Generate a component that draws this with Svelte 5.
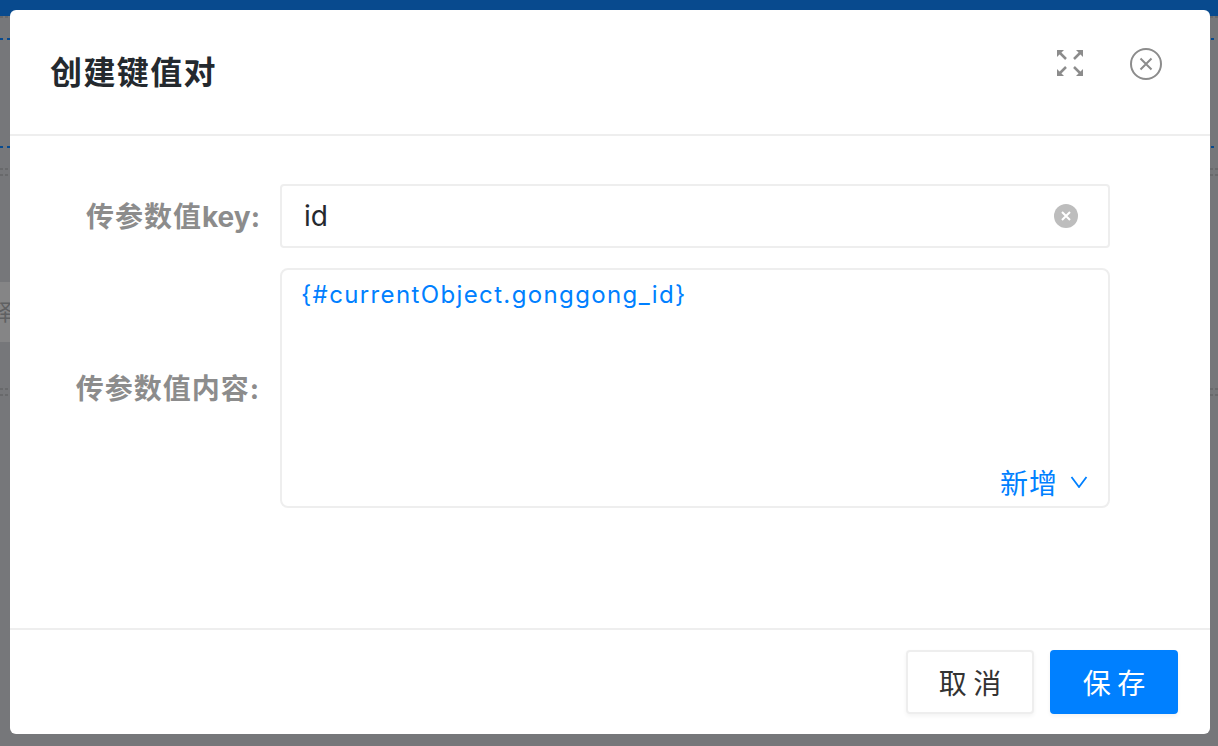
<script>
  let key = $state('id');
  let content = $state('{#currentObject.gonggong_id}');
</script>

<div class="page">
  <div class="topbar"></div>
  <div class="behind-page">
    <i class="dash gray d0"></i>
    <i class="dash navy d1"></i>
    <i class="dash navy d2"></i>
    <i class="dash gray d3"></i>
    <i class="dash gray d4"></i>
    <span class="behind">释</span>
    <i class="dash gray d5"></i>
    <i class="dash gray d6"></i>
  </div>

  <div class="modal">
    <header class="modal-head">
      <h2>创建键值对</h2>
      <div class="head-icons">
        <svg class="expand" width="26" height="26" viewBox="0 0 26 26" fill="#8c8c8c" stroke="#8c8c8c">
          <path d="M0 0h7L0 7z" stroke="none" />
          <path d="M3 3l6 6" stroke-width="2.5" />
          <path d="M26 0h-7L26 7z" stroke="none" />
          <path d="M23 3l-6 6" stroke-width="2.5" />
          <path d="M0 26h7L0 19z" stroke="none" />
          <path d="M3 23l6-6" stroke-width="2.5" />
          <path d="M26 26h-7L26 19z" stroke="none" />
          <path d="M23 23l-6-6" stroke-width="2.5" />
        </svg>
        <svg width="32" height="32" viewBox="0 0 32 32" fill="none" stroke="#8c8c8c">
          <circle cx="16" cy="16" r="15" stroke-width="2" />
          <path d="M10.5 10.5l11 11M21.5 10.5l-11 11" stroke-width="2" />
        </svg>
      </div>
    </header>

    <div class="modal-body">
      <div class="row">
        <label for="kv-key">传参数值<span class="latin">key:</span></label>
        <div class="input-wrap">
          <input id="kv-key" bind:value={key} />
          <span class="clear">
            <svg width="10" height="10" viewBox="0 0 10 10" stroke="#fff" stroke-width="2">
              <path d="M1 1l8 8M9 1l-8 8" />
            </svg>
          </span>
        </div>
      </div>
      <div class="row">
        <label for="kv-content">传参数值内容:</label>
        <div class="area-wrap">
          <textarea id="kv-content" bind:value={content}></textarea>
          <button class="add">
            新增
            <svg width="18" height="12" viewBox="0 0 18 12" fill="none" stroke="#0080ff" stroke-width="1.8">
              <path d="M1.5 1l7.5 10 7.5-10" />
            </svg>
          </button>
        </div>
      </div>
    </div>

    <footer class="modal-foot">
      <button class="btn">取 消</button>
      <button class="btn primary">保 存</button>
    </footer>
  </div>
</div>

<style>
  :global(body) {
    margin: 0;
    background: #76777a;
    font-family: Inter, "Noto Sans CJK SC", sans-serif;
  }

  .page {
    position: relative;
    width: 1218px;
    height: 746px;
    overflow: hidden;
    background: #76777a;
  }

  .topbar {
    height: 16px;
    background: #084a8e;
  }

  .behind-page {
    position: absolute;
    inset: 0;
  }

  .dash {
    position: absolute;
    left: 0;
    width: 100%;
    height: 2px;
  }
  .navy {
    background: repeating-linear-gradient(90deg, #084a8e 0 3.5px, transparent 3.5px 7px);
  }
  .gray {
    background: repeating-linear-gradient(90deg, #68696b 0 3px, transparent 3px 5px);
  }
  .d0 { top: 16px; }
  .d1 { top: 38px; }
  .d2 { top: 146px; }
  .d3 { top: 168px; }
  .d4 { top: 174px; }
  .d5 { top: 388px; }
  .d6 { top: 394px; }

  .behind {
    position: absolute;
    top: 282px;
    left: -10px;
    width: 20px;
    height: 60px;
    line-height: 60px;
    font-size: 22px;
    color: #5f6062;
    background: #858586;
  }

  .modal {
    position: absolute;
    top: 10px;
    left: 10px;
    width: 1200px;
    height: 724px;
    display: flex;
    flex-direction: column;
    background: #fff;
    border-radius: 6px;
  }

  .modal-head {
    flex: none;
    display: flex;
    justify-content: space-between;
    padding: 38px 48px 0 40px;
    height: 86px;
    border-bottom: 2px solid #eeeeee;
  }

  .modal-head h2 {
    margin: 0;
    font-size: 32px;
    letter-spacing: 1.4px;
    line-height: 50px;
    font-weight: 700;
    color: #24292e;
  }

  .head-icons {
    display: flex;
    gap: 47px;
    align-items: flex-start;
  }
  .expand {
    margin-top: 2px;
  }

  .modal-body {
    flex: 1;
    display: flex;
    flex-direction: column;
    gap: 20px;
    padding-top: 48px;
  }

  .row {
    display: flex;
    align-items: center;
  }

  label {
    width: 250px;
    text-align: right;
    font-size: 28px;
    letter-spacing: 1px;
    line-height: 40px;
    padding-top: 2px;
    font-weight: 700;
    color: #8c8c8c;
    margin-right: 20px;
  }
  .latin {
    letter-spacing: 0;
  }

  .input-wrap {
    position: relative;
    width: 830px;
    height: 64px;
  }

  input {
    width: 100%;
    height: 100%;
    box-sizing: border-box;
    padding: 0 60px 0 22px;
    border: 2px solid #eeeeee;
    border-radius: 4px;
    outline: none;
    font: 28px Inter, sans-serif;
    color: #24292e;
  }

  .clear {
    position: absolute;
    right: 32px;
    top: 20px;
    width: 24px;
    height: 24px;
    border-radius: 50%;
    background: #bdbdbd;
    display: flex;
    align-items: center;
    justify-content: center;
  }

  .area-wrap {
    position: relative;
    width: 830px;
    height: 240px;
  }

  textarea {
    display: block;
    width: 100%;
    height: 100%;
    box-sizing: border-box;
    padding: 10px 19px;
    border: 2px solid #eeeeee;
    border-radius: 8px;
    outline: none;
    resize: none;
    font: 24px/30px Inter, sans-serif;
    letter-spacing: 1.37px;
    color: #0080ff;
  }

  .add {
    position: absolute;
    right: 22px;
    bottom: 6px;
    display: flex;
    align-items: center;
    gap: 12px;
    padding: 0;
    border: 0;
    background: none;
    font: 28px "Noto Sans CJK SC", sans-serif;
    letter-spacing: 1px;
    color: #0080ff;
  }

  .modal-foot {
    flex: none;
    height: 106px;
    display: flex;
    justify-content: flex-end;
    gap: 16px;
    padding: 20px 32px 0 0;
    box-sizing: border-box;
    border-top: 2px solid #eeeeee;
  }

  .btn {
    width: 128px;
    height: 64px;
    border: 2px solid #eeeeee;
    border-radius: 4px;
    background: #fff;
    font: 28px "Noto Sans CJK SC", sans-serif;
    color: #333;
    box-shadow: 0 2px 4px rgba(0, 0, 0, 0.05);
  }

  .primary {
    border-color: #0080ff;
    background: #0080ff;
    color: #fff;
  }
</style>
